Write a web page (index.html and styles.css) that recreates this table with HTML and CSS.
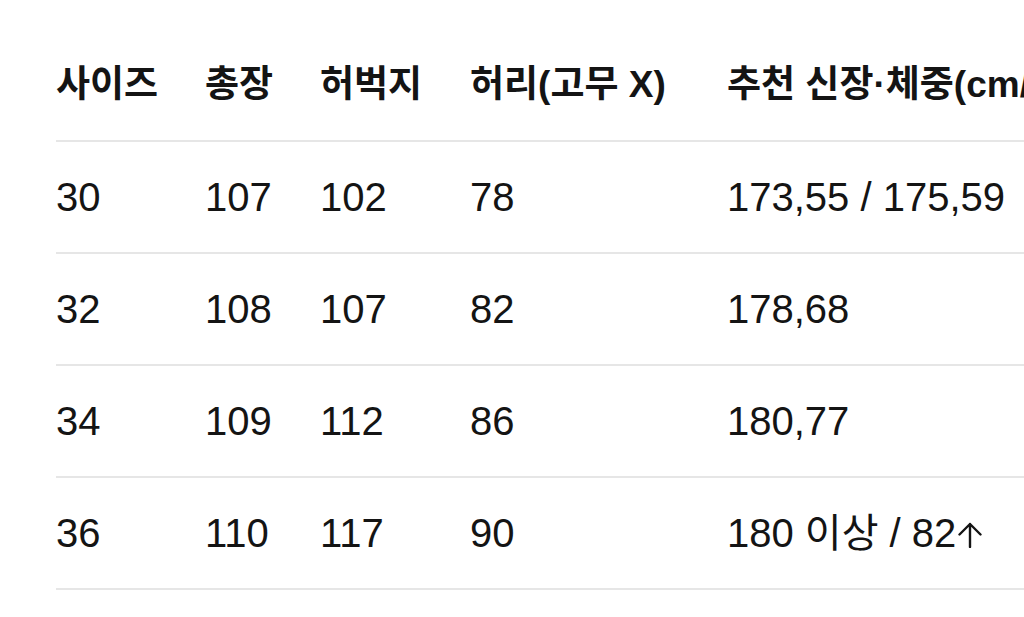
FILE: index.html
```html
<!DOCTYPE html>
<html lang="ko">
<head>
<meta charset="utf-8">
<link rel="stylesheet" href="styles.css">
</head>
<body>
<div class="wrap">
<table class="size-table">
  <colgroup>
    <col class="c1"><col class="c2"><col class="c3"><col class="c4"><col class="c5">
  </colgroup>
  <thead>
    <tr><th>사이즈</th><th>총장</th><th>허벅지</th><th>허리(고무 X)</th><th>추천 신장·체중(cm/kg)</th></tr>
  </thead>
  <tbody>
    <tr><td>30</td><td>107</td><td>102</td><td>78</td><td>173,55 / 175,59</td></tr>
    <tr><td>32</td><td>108</td><td>107</td><td>82</td><td>178,68</td></tr>
    <tr><td>34</td><td>109</td><td>112</td><td>86</td><td>180,77</td></tr>
    <tr><td>36</td><td>110</td><td>117</td><td>90</td><td>180 이상 / 82<svg class="arrow" viewBox="0 0 26 26" width="26" height="26" aria-label="↑"><path d="M13 25V2M2.5 12.5L13 2l10.5 10.5" fill="none" stroke="#141414" stroke-width="2.4" stroke-linecap="round" stroke-linejoin="round"/></svg></td></tr>
  </tbody>
</table>
</div>
</body>
</html>
```
FILE: styles.css
```css
html, body {
  margin: 0;
  padding: 0;
  background: #ffffff;
  overflow: hidden;
}
.wrap {
  padding: 30px 0 0 56px;
  width: 1400px;
}
.size-table {
  border-collapse: collapse;
  table-layout: fixed;
  width: 1300px;
  font-family: "Liberation Sans", "Noto Sans CJK KR", sans-serif;
  font-size: 40px;
  line-height: 46px;
  color: #141414;
}
.c1 { width: 149px; }
.c2 { width: 115px; }
.c3 { width: 150px; }
.c4 { width: 257px; }
.c5 { width: 629px; }
.size-table th,
.size-table td {
  height: 110px;
  padding: 0;
  text-align: left;
  vertical-align: middle;
  white-space: nowrap;
  border-bottom: 2px solid #e6e6e6;
}
.size-table th {
  font-weight: 700;
  font-family: "Liberation Sans", "Noto Sans CJK KR", sans-serif;
  font-size: 37px;
  line-height: 46px;
}
.size-table td {
  font-weight: 400;
}
.arrow {
  display: inline-block;
  vertical-align: -1px;
  margin-left: 1px;
}
```
